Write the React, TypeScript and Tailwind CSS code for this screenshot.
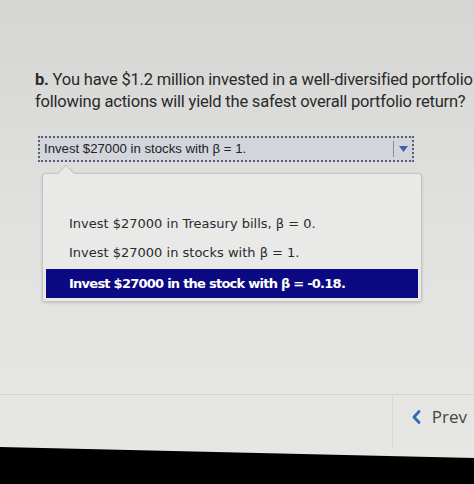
import React from "react";

const options = [
  "Invest $27000 in Treasury bills, β = 0.",
  "Invest $27000 in stocks with β = 1.",
  "Invest $27000 in the stock with β = -0.18.",
];

export default function App() {
  const selected = 2;
  return (
    <div className="relative w-[474px] h-[484px] overflow-hidden bg-gradient-to-b from-[#d5d5d4] via-[#e2e2e0] to-[#e7e7e4]">
      <div
        className="pl-[35px] pt-[69px] text-[16.5px] tracking-[-0.2px] leading-[22px] text-[#2a2a2a] whitespace-nowrap overflow-hidden"
        style={{ fontFamily: "Roboto, 'Liberation Sans', sans-serif" }}
      >
        <div>
          <span className="font-bold">b.</span> You have $1.2 million invested in a well-diversified portfolio
        </div>
        <div>following actions will yield the safest overall portfolio return?</div>
      </div>

      <div
        className="ml-[38px] mt-[23px] w-[376px] h-[26px] flex items-center bg-[#d3d5dc] border-2 border-dotted border-[#5a5f75]"
        style={{ fontFamily: "'Liberation Sans', Arial, sans-serif" }}
      >
        <span className="pl-[4px] text-[13.2px] text-[#222] flex-1">Invest $27000 in stocks with β = 1.</span>
        <span className="w-px h-[16px] bg-[#8a8d99]" />
        <span className="w-[18px] flex justify-center">
          <svg width="9" height="6" viewBox="0 0 9 6">
            <path d="M0 0 L9 0 L4.5 6 Z" fill="#3b62a8" />
          </svg>
        </span>
      </div>

      <div className="relative ml-[42px] mt-[11px] w-[380px] h-[129px] bg-[#e9e9e8] border border-[#c4c4c4] rounded-[3px] shadow-[0_1px_3px_rgba(0,0,0,0.15)] pt-[35px] px-[3px]">
        <div className="absolute -top-[7px] left-[17px] w-[12px] h-[12px] rotate-45 bg-[#e9e9e8] border-l border-t border-[#c4c4c4]" />
        {options.map((o, i) => (
          <div
            key={o}
            className={
              i === selected
                ? "h-[29px] flex items-center pl-[23px] bg-[#0c0a82] text-white font-bold text-[13px] tracking-[-0.75px] mt-[2px]"
                : "h-[29px] flex items-center pl-[23px] text-[#2b2b2b] text-[13px]"
            }
            style={{ fontFamily: "'DejaVu Sans', Verdana, sans-serif" }}
          >
            {o}
          </div>
        ))}
      </div>

      <div className="mt-[92px] h-px bg-[#d4d4d2]" />
      <div className="flex justify-end h-[54px]">
        <div className="w-px bg-[#d6d6d4] mr-[19px]" />
        <div
          className="flex items-center gap-[11px] pr-[7px] pb-[10px] text-[17px] text-[#454545]"
          style={{ fontFamily: "'Open Sans', sans-serif" }}
        >
          <svg width="9" height="14" viewBox="0 0 9 14">
            <path d="M7 1.5 L2 7 L7 12.5" stroke="#2f6db5" strokeWidth="2.8" fill="none" strokeLinecap="round" strokeLinejoin="round" />
          </svg>
          <span>Prev</span>
        </div>
      </div>
      <div className="absolute left-0 right-0 bottom-0 h-[37px] bg-black" style={{ clipPath: "polygon(0 0, 100% 30%, 100% 100%, 0 100%)" }} />
    </div>
  );
}
